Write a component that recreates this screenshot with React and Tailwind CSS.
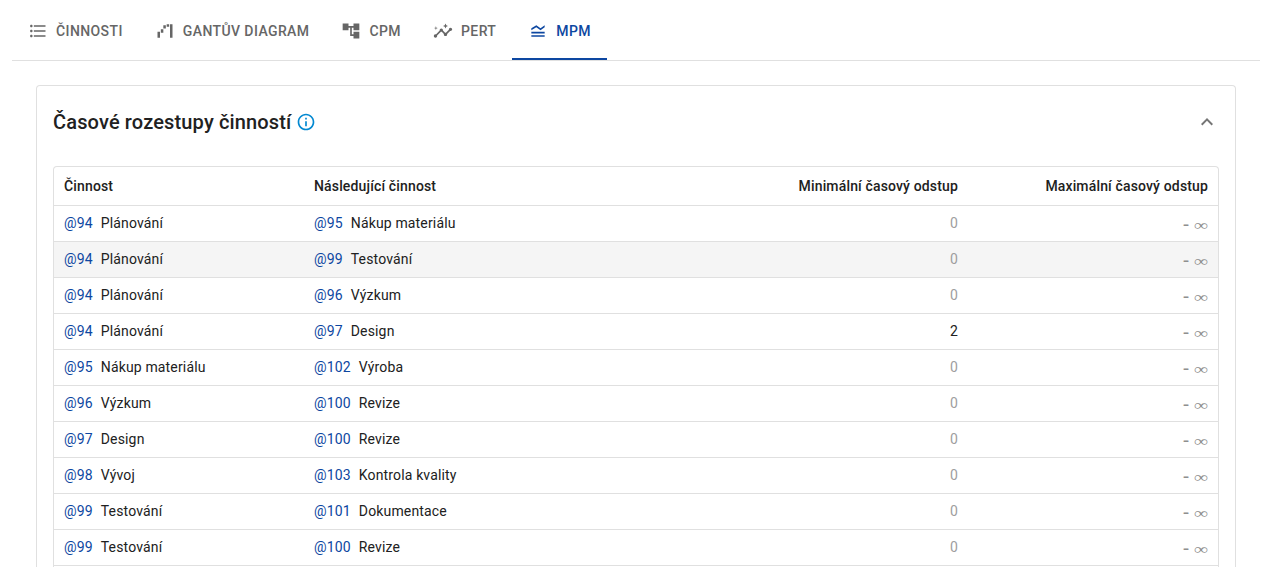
import {
  MdFormatListBulleted,
  MdWaterfallChart,
  MdAccountTree,
  MdInsights,
  MdLegendToggle,
  MdOutlineInfo,
  MdExpandLess,
} from "react-icons/md";

const tabs = [
  { label: "Činnosti", Icon: MdFormatListBulleted },
  { label: "Gantův diagram", Icon: MdWaterfallChart },
  { label: "CPM", Icon: MdAccountTree },
  { label: "PERT", Icon: MdInsights },
  { label: "MPM", Icon: MdLegendToggle, active: true },
];

const rows = [
  [94, "Plánování", 95, "Nákup materiálu", 0],
  [94, "Plánování", 99, "Testování", 0],
  [94, "Plánování", 96, "Výzkum", 0],
  [94, "Plánování", 97, "Design", 2],
  [95, "Nákup materiálu", 102, "Výroba", 0],
  [96, "Výzkum", 100, "Revize", 0],
  [97, "Design", 100, "Revize", 0],
  [98, "Vývoj", 103, "Kontrola kvality", 0],
  [99, "Testování", 101, "Dokumentace", 0],
  [99, "Testování", 100, "Revize", 0],
];

function Activity({ id, name }) {
  return (
    <div className="flex gap-2 px-[10px] pb-0.5">
      <span className="text-[#0d47a1]">@{id}</span>
      <span>{name}</span>
    </div>
  );
}

function Unbounded() {
  return (
    <div className="flex h-full items-center justify-end gap-[5px] pt-1 pr-[10px] text-[#8f8f8f]">
      <span className="-mt-[3px] text-xl leading-5">-</span>
      <span className="-mt-px w-[14px] origin-center scale-y-[.72] text-center font-['Liberation_Serif',serif] text-[20px] leading-5 tracking-normal">
        ∞
      </span>
    </div>
  );
}

export default function App() {
  return (
    <div className="h-[567px] overflow-hidden bg-white pl-3 font-[Roboto,sans-serif] text-[#212121] antialiased">
      <nav className="flex h-[61px] w-[1248px] border-b border-[#e0e0e0]">
        {tabs.map(({ label, Icon, active }) => (
          <button
            key={label}
            className={
              "flex h-[60px] items-center gap-2 border-b-2 px-4 text-sm font-medium tracking-[0.02857em] uppercase " +
              (active ? "border-[#0d47a1] text-[#0d47a1]" : "border-transparent text-[#666666]")
            }
          >
            <Icon className="mt-[3px] size-5" />
            <span className="mt-[3px]">{label}</span>
          </button>
        ))}
      </nav>

      <section className="mt-6 ml-6 w-[1200px] rounded-t border border-b-0 border-[#e0e0e0] px-4">
        <header className="flex h-20 items-center justify-between">
          <div className="-mt-2 flex items-center gap-1">
            <h1 className="text-xl leading-8 font-medium tracking-[0.0075em]">Časové rozestupy činností</h1>
            <MdOutlineInfo className="size-5 text-[#0288d1]" />
          </div>
          <MdExpandLess className="-mt-2 size-6 text-[#757575]" />
        </header>

        <div className="rounded-t border border-b-0 border-[#e0e0e0] text-sm tracking-[0.01071em]">
          <div className="grid h-[39px] grid-cols-[250px_1fr_250px_250px] items-center border-b border-[#e0e0e0] font-medium">
            <div className="px-[10px]">Činnost</div>
            <div className="px-[10px]">Následující činnost</div>
            <div className="px-[10px] text-right">Minimální časový odstup</div>
            <div className="px-[10px] text-right">Maximální časový odstup</div>
          </div>
          {rows.map(([id, name, nextId, nextName, min], i) => (
            <div
              key={i}
              className={
                "grid h-9 grid-cols-[250px_1fr_250px_250px] items-center border-b border-[#e0e0e0] " +
                (i === 1 ? "bg-[#f5f5f5]" : "")
              }
            >
              <Activity id={id} name={name} />
              <Activity id={nextId} name={nextName} />
              <div className={"px-[10px] pb-0.5 text-right " + (min === 0 ? "text-[#9e9e9e]" : "")}>{min}</div>
              <Unbounded />
            </div>
          ))}
          <div className="h-2" />
        </div>
      </section>
    </div>
  );
}
